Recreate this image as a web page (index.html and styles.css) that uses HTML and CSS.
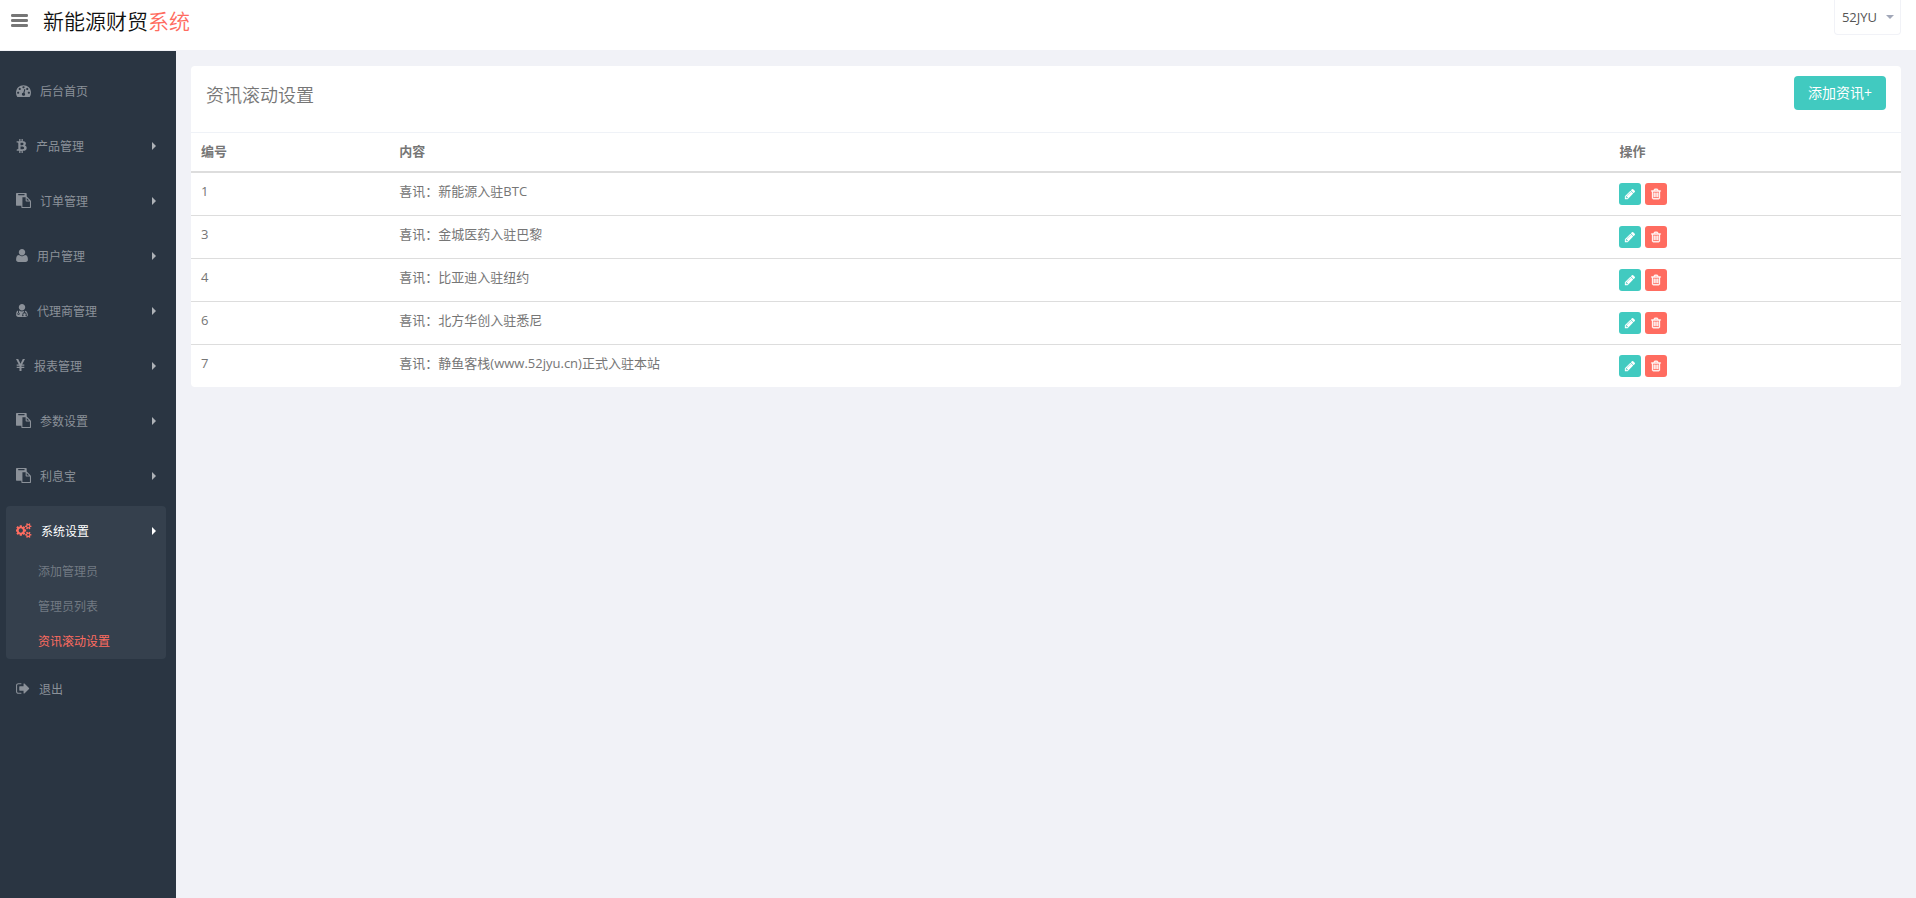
FILE: index.html
```html
<!DOCTYPE html>
<html lang="zh-CN">
<head>
<meta charset="utf-8">
<meta name="viewport" content="width=device-width, initial-scale=1">
<title>资讯滚动设置</title>
<link rel="stylesheet" href="styles.css">
</head>
<body>
<svg class="sprite" aria-hidden="true">
  <symbol id="i-bars" viewBox="0 0 17 14"><path d="M0 1.2q0-1.2 1.2-1.2h14.6q1.200 0 1.200 1.200v.6q0 1.200-1.200 1.200H1.200Q0 3 0 1.800zM0 6.200q0-1.200 1.200-1.200h14.600q1.200 0 1.200 1.200v.6q0 1.200-1.200 1.200H1.200Q0 8 0 6.800zM0 11.200q0-1.200 1.200-1.200h14.600q1.200 0 1.200 1.200v.6q0 1.200-1.200 1.200H1.200Q0 13 0 11.800z"/></symbol>
  <symbol id="i-dash" viewBox="0 0 1792 1792"><path d="M384 1152q0-53-37.5-90.5t-90.5-37.5-90.5 37.500-37.500 90.500 37.500 90.500 90.500 37.500 90.500-37.500 37.500-90.500zm192-448q0-53-37.500-90.500t-90.500-37.500-90.500 37.500-37.500 90.500 37.500 90.500 90.500 37.500 90.500-37.500 37.500-90.500zm428 481l101-382q6-26-7.500-48.500t-38.500-29.500-48 6.500-30 39.500l-101 382q-60 5-107 43.500t-63 98.500q-20 77 20 146t117 89 146-20 89-117q16-60-6-117t-72-91zm660-33q0-53-37.500-90.500t-90.500-37.500-90.500 37.500-37.500 90.500 37.500 90.500 90.500 37.500 90.500-37.500 37.500-90.500zm-640-640q0-53-37.500-90.500t-90.500-37.500-90.500 37.500-37.500 90.500 37.500 90.500 90.500 37.500 90.500-37.500 37.500-90.500zm448 192q0-53-37.500-90.500t-90.500-37.500-90.500 37.500-37.500 90.500 37.500 90.500 90.500 37.500 90.500-37.500 37.500-90.500zm320 448q0 261-141 483-19 29-54 29h-1402q-35 0-54-29-141-221-141-483 0-182 71-348t191-286 286-191 348-71 348 71 286 191 191 286 71 348z"/></symbol>
  <symbol id="i-btc" viewBox="0 0 1280 1792"><path d="M1167 640q18 182-131 258 117 28 175 103t45 214q-7 71-32.500 125t-64.500 89-97 58.500-121.500 34.500-145.500 15v255h-154v-251q-80 0-122-1v252h-154v-255q-18 0-54-.5t-55-.5h-200l31-183h111q50 0 58-51v-402h16q-6-1-16-1v-287q-13-68-89-68h-111v-164l212 1q64 0 97-1v-252h154v247q82-2 122-2v-245h154v252q79 7 140 22.500t113 45 82.500 78 36.500 114.500zm-215 545q0-36-15-64t-37-46-57.500-30.500-65.500-18.500-74-9-69-3-64.500 1-47.500 1v338q8 0 37 .5t48 .5 53-1.500 58.500-4 57-8.500 55.500-14 47.500-21 39.500-30 24.500-40 9.500-51zm-71-476q0-33-12.500-58.500t-30.500-42-48-28-55-16.500-61.500-8-58-2.500-54 1-39.500.5v307q5 0 34.500.5t46.500 0 50-2 55-5.500 51.500-11 48.500-18.500 37-27 27-38.500 9-51z"/></symbol>
  <symbol id="i-paste" viewBox="0 0 1792 1792"><path d="M768 1664h896v-640h-416q-40 0-68-28t-28-68v-416h-384v1152zm256-1440v-64q0-13-9.500-22.500t-22.500-9.500h-704q-13 0-22.500 9.500t-9.500 22.500v64q0 13 9.500 22.500t22.500 9.500h704q13 0 22.500-9.500t9.500-22.500zm256 672h299l-299-299v299zm512 128v672q0 40-28 68t-68 28h-960q-40 0-68-28t-28-68v-160h-544q-40 0-68-28t-28-68v-1344q0-40 28-68t68-28h1088q40 0 68 28t28 68v328q21 13 36 28l408 408q28 28 48 76t20 88z"/></symbol>
  <symbol id="i-user" viewBox="192 0 1408 1792"><path d="M1600 1405q0 120-73 189.500t-194 69.500h-874q-121 0-194-69.500t-73-189.500q0-53 3.500-103.500t14-109 26.500-108.500 43-97.500 62-81 85.500-53.500 111.500-20q9 0 42 21.500t74.500 48 108 48 133.500 21.500 133.500-21.500 108-48 74.500-48 42-21.500q61 0 111.500 20t85.500 53.500 62 81 43 97.500 26.500 108.500 14 109 3.500 103.500zm-320-893q0 159-112.500 271.500t-271.500 112.500-271.500-112.500-112.500-271.500 112.500-271.500 271.500-112.500 271.500 112.500 112.500 271.500z"/></symbol>
  <symbol id="i-doctor" viewBox="192 0 1408 1792"><path d="M1280 512q0 159-112.500 271.500t-271.500 112.500-271.500-112.500-112.500-271.500 112.500-271.500 271.500-112.500 271.500 112.500 112.500 271.500z"/><path fill-rule="evenodd" d="M459 1664q-121 0-194-69.500t-73-189.500q0-180 45-320 50-150 190-180v250a140 140 0 1 0 110 0v-245q170 110 359 110 130 0 250-50v140q-190 20-200 220v90a90 90 0 1 0 100 0v-90q0-120 150-120t150 120v90a90 90 0 1 0 100 0v-90q0-180-190-218V930q254 20 344 475 0 120-73 189.500t-194 69.500zM480 1230a60 60 0 1 0 .1 0z"/></symbol>
  <symbol id="i-yen" viewBox="0 0 9 15"><path d="M0 1h2.200l2.300 4.700L6.800 1H9L6.200 6.400H8.300v1.300H5.500v1H8.300V10H5.500v3H3.500v-3H.7V8.700H3.500v-1H.7V6.400H2.800z"/></symbol>
  <symbol id="i-cogs" viewBox="0 0 1920 1792"><path d="M832 896q0-106-75-181t-181-75-181 75-75 181 75 181 181 75 181-75 75-181zm768 512q0-52-38-90t-90-38-90 38-38 90q0 53 37.500 90.500t90.500 37.500 90.500-37.500 37.500-90.500zm0-1024q0-52-38-90t-90-38-90 38-38 90q0 53 37.500 90.500t90.500 37.500 90.500-37.500 37.500-90.500zm-384 421v185q0 10-7 19.500t-16 10.500l-155 24q-11 35-32 76 34 48 90 115 7 11 7 20 0 12-7 19-23 30-82.500 89.500t-78.500 59.500q-11 0-21-7l-115-90q-37 19-77 31-11 108-23 155-7 24-30 24h-186q-11 0-20-7.500t-10-17.500l-23-153q-34-10-75-31l-118 89q-7 7-20 7-11 0-21-8-144-133-144-160 0-9 7-19 10-14 41-53t47-61q-23-44-35-82l-152-24q-10-1-17-9.500t-7-19.500v-185q0-10 7-19.500t16-10.500l155-24q11-35 32-76-34-48-90-115-7-11-7-20 0-12 7-20 22-30 82-89t79-59q11 0 21 7l115 90q34-18 77-32 11-108 23-154 7-24 30-24h186q11 0 20 7.500t10 17.500l23 153q34 10 75 31l118-89q8-7 20-7 11 0 21 8 144 133 144 160 0 8-7 19-12 16-42 54t-45 60q23 48 34 82l152 23q10 2 17 10.500t7 19.500zm640 533v140q0 16-149 31-12 27-30 52 51 113 51 138 0 4-4 7-122 71-124 71-8 0-46-47t-52-68q-20 2-30 2t-30-2q-14 21-52 68t-46 47q-2 0-124-71-4-3-4-7 0-25 51-138-18-25-30-52-149-15-149-31v-140q0-16 149-31 13-29 30-52-51-113-51-138 0-4 4-7 4-2 35-20t59-34 30-16q8 0 46 46.500t52 67.500q20-2 30-2t30 2q51-71 92-112l6-2q4 0 124 70 4 3 4 7 0 25-51 138 17 23 30 52 149 15 149 31zm0-1024v140q0 16-149 31-12 27-30 52 51 113 51 138 0 4-4 7-122 71-124 71-8 0-46-47t-52-68q-20 2-30 2t-30-2q-14 21-52 68t-46 47q-2 0-124-71-4-3-4-7 0-25 51-138-18-25-30-52-149-15-149-31v-140q0-16 149-31 13-29 30-52-51-113-51-138 0-4 4-7 4-2 35-20t59-34 30-16q8 0 46 46.500t52 67.500q20-2 30-2t30 2q51-71 92-112l6-2q4 0 124 70 4 3 4 7 0 25-51 138 17 23 30 52 149 15 149 31z"/></symbol>
  <symbol id="i-exit" viewBox="64 0 1664 1792"><path d="M704 1440q0 4 1 20t.5 26.500-3 23.500-10 19.500-20.500 6.500h-320q-119 0-203.500-84.500t-84.500-203.500v-704q0-119 84.500-203.500t203.500-84.500h320q13 0 22.500 9.500t9.500 22.500q0 4 1 20t.5 26.500-3 23.500-10 19.500-20.500 6.500h-320q-66 0-113 47t-47 113v704q0 66 47 113t113 47h312l11.500 1 11.500 3 8 5.500 7 9 2 13.500zm928-544q0 26-19 45l-544 544q-19 19-45 19t-45-19-19-45v-288h-448q-26 0-45-19t-19-45v-384q0-26 19-45t45-19h448v-288q0-26 19-45t45-19 45 19l544 544q19 19 19 45z"/></symbol>
  <symbol id="i-pencil" viewBox="0 0 1792 1792"><path d="M491 1536l91-91-235-235-91 91v107h128v128h107zm523-928q0-22-22-22-10 0-17 7l-542 542q-7 7-7 17 0 22 22 22 10 0 17-7l542-542q7-7 7-17zm-54-192l416 416-832 832h-416v-416zm683 96q0 53-37 90l-166 166-416-416 166-165q36-38 90-38 53 0 91 38l235 234q37 39 37 91z"/></symbol>
  <symbol id="i-trash" viewBox="0 0 1792 1792"><path d="M704 736v576q0 14-9 23t-23 9h-64q-14 0-23-9t-9-23v-576q0-14 9-23t23-9h64q14 0 23 9t9 23zm256 0v576q0 14-9 23t-23 9h-64q-14 0-23-9t-9-23v-576q0-14 9-23t23-9h64q14 0 23 9t9 23zm256 0v576q0 14-9 23t-23 9h-64q-14 0-23-9t-9-23v-576q0-14 9-23t23-9h64q14 0 23 9t9 23zm128 724v-948h-896v948q0 22 7 40.500t14.500 27 10.500 8.500h832q3 0 10.500-8.500t14.500-27 7-40.500zm-672-1076h448l-48-117q-7-9-17-11h-317q-10 2-17 11zm928 32v64q0 14-9 23t-23 9h-96v948q0 83-47 143.500t-113 60.500h-832q-66 0-113-58.500t-47-141.500v-952h-96q-14 0-23-9t-9-23v-64q0-14 9-23t23-9h309l70-167q15-37 54-63t79-26h320q40 0 79 26t54 63l70 167h309q14 0 23 9t9 23z"/></symbol>
</svg>

<header class="header">
  <button class="toggle" type="button" aria-label="切换菜单"><svg><use href="#i-bars"/></svg></button>
  <a class="logo" href="#">新能源财贸<span>系统</span></a>
  <button class="account" type="button">52JYU<i class="caret-down"></i></button>
</header>

<div class="body">
  <nav class="sidebar">
    <ul class="menu">
      <li><a class="item" href="#"><svg class="w15"><use href="#i-dash"/></svg>后台首页</a></li>
      <li><a class="item" href="#"><svg class="w11"><use href="#i-btc"/></svg>产品管理<i class="arrow"></i></a></li>
      <li><a class="item" href="#"><svg class="w15"><use href="#i-paste"/></svg>订单管理<i class="arrow"></i></a></li>
      <li><a class="item" href="#"><svg class="w12"><use href="#i-user"/></svg>用户管理<i class="arrow"></i></a></li>
      <li><a class="item" href="#"><svg class="w12"><use href="#i-doctor"/></svg>代理商管理<i class="arrow"></i></a></li>
      <li><a class="item" href="#"><svg class="w9"><use href="#i-yen"/></svg>报表管理<i class="arrow"></i></a></li>
      <li><a class="item" href="#"><svg class="w15"><use href="#i-paste"/></svg>参数设置<i class="arrow"></i></a></li>
      <li><a class="item" href="#"><svg class="w15"><use href="#i-paste"/></svg>利息宝<i class="arrow"></i></a></li>
      <li class="open">
        <a class="item" href="#"><svg class="w16"><use href="#i-cogs"/></svg>系统设置<i class="arrow"></i></a>
        <ul class="submenu">
          <li><a href="#">添加管理员</a></li>
          <li><a href="#">管理员列表</a></li>
          <li><a class="current" href="#">资讯滚动设置</a></li>
        </ul>
      </li>
      <li><a class="item" href="#"><svg class="w14"><use href="#i-exit"/></svg>退出</a></li>
    </ul>
  </nav>

  <main class="main">
    <section class="panel">
      <div class="panel-head">
        <h1>资讯滚动设置</h1>
        <button class="add" type="button">添加资讯+</button>
      </div>
      <table class="list">
        <colgroup><col class="col-id"><col class="col-text"><col></colgroup>
        <thead><tr><th>编号</th><th>内容</th><th>操作</th></tr></thead>
        <tbody>
          <tr><td>1</td><td>喜讯：新能源入驻BTC</td><td class="ops"><div class="actions"><button class="edit" type="button" aria-label="编辑"><svg><use href="#i-pencil"/></svg></button><button class="remove" type="button" aria-label="删除"><svg><use href="#i-trash"/></svg></button></div></td></tr>
          <tr><td>3</td><td>喜讯：金城医药入驻巴黎</td><td class="ops"><div class="actions"><button class="edit" type="button" aria-label="编辑"><svg><use href="#i-pencil"/></svg></button><button class="remove" type="button" aria-label="删除"><svg><use href="#i-trash"/></svg></button></div></td></tr>
          <tr><td>4</td><td>喜讯：比亚迪入驻纽约</td><td class="ops"><div class="actions"><button class="edit" type="button" aria-label="编辑"><svg><use href="#i-pencil"/></svg></button><button class="remove" type="button" aria-label="删除"><svg><use href="#i-trash"/></svg></button></div></td></tr>
          <tr><td>6</td><td>喜讯：北方华创入驻悉尼</td><td class="ops"><div class="actions"><button class="edit" type="button" aria-label="编辑"><svg><use href="#i-pencil"/></svg></button><button class="remove" type="button" aria-label="删除"><svg><use href="#i-trash"/></svg></button></div></td></tr>
          <tr><td>7</td><td>喜讯：静鱼客栈(www.52jyu.cn)正式入驻本站</td><td class="ops"><div class="actions"><button class="edit" type="button" aria-label="编辑"><svg><use href="#i-pencil"/></svg></button><button class="remove" type="button" aria-label="删除"><svg><use href="#i-trash"/></svg></button></div></td></tr>
        </tbody>
      </table>
    </section>
  </main>
</div>
</body>
</html>
```
FILE: styles.css
```css
* { box-sizing: border-box; }

body {
  margin: 0;
  min-height: 100vh;
  display: flex;
  flex-direction: column;
  background: #f1f2f7;
  color: #767676;
  font: 13px/18px "Open Sans", "Noto Sans CJK SC", sans-serif;
}

a { color: inherit; text-decoration: none; }
ul { list-style: none; margin: 0; padding: 0; }
svg { fill: currentColor; display: block; }
.sprite { display: none; }

button {
  border: 0;
  padding: 0;
  background: none;
  color: inherit;
  font: inherit;
  cursor: pointer;
}

/* Header */
.header {
  display: flex;
  align-items: flex-start;
  padding: 0 15px 0 11px;
  height: 51px;
  background: #fff;
  border-bottom: 1px solid #f1f2f7;
}
.toggle { margin-top: 14px; }
.toggle svg { width: 17px; height: 14px; }
.logo {
  margin: 6px 0 0 15px;
  color: #111;
  font-size: 21px;
  font-weight: 350;
  line-height: 30px;
}
.logo span { color: #ff6c60; }
.account {
  display: flex;
  align-items: center;
  gap: 9px;
  margin-left: auto;
  height: 35px;
  padding: 0 6px 0 7px;
  border: 1px solid #f1f2f7;
  border-top: 0;
  border-radius: 0 0 4px 4px;
  color: #555;
}
.caret-down {
  border: 4px solid transparent;
  border-top-color: #a1a7b8;
  border-bottom: 0;
}

.body { flex: 1; display: flex; }

/* Sidebar */
.sidebar {
  width: 176px;
  flex: none;
  padding: 15px 10px 15px 6px;
  background: #2a3542;
  color: #8b9199;
  font-size: 12px;
}
.menu > li { margin-bottom: 5px; border-radius: 4px; }
.item {
  display: flex;
  align-items: center;
  gap: 9px;
  height: 50px;
  padding: 2px 10px 0;
}
.item svg { height: 15px; margin-bottom: 4px; }
.w9 { width: 9px; }
.w11 { width: 11px; }
.w12 { width: 12px; }
.w14 { width: 14px; }
.w15 { width: 15px; }
.w16 { width: 16px; }
.arrow {
  margin: 0 0 2px auto;
  border: 4px solid transparent;
  border-left-color: #aeb2b7;
  border-right: 0;
}
.open { background: #35404d; }
.open .item { color: #fff; }
.open .item svg { color: #ff6c60; }
.open .arrow { border-left-color: #fff; }
.submenu { margin-top: -2px; color: #727a83; }
.submenu a { display: block; padding-left: 32px; line-height: 35px; }
.submenu .current { color: #ff6c60; }

/* Content */
.main { flex: 1; min-width: 0; padding: 15px; }
.panel { background: #fff; border-radius: 4px; }
.panel-head {
  display: flex;
  justify-content: space-between;
  align-items: flex-start;
  padding: 10px 15px 22px;
  border-bottom: 1px solid #eff2f7;
}
.panel-head h1 {
  margin: 5px 0 0;
  font-size: 18px;
  font-weight: 350;
  line-height: 28px;
}
.add {
  height: 34px;
  padding: 0 14px;
  border-radius: 4px;
  background: #41cac0;
  color: #fff;
  font-size: 14px;
}

.list { width: 100%; table-layout: fixed; border-spacing: 0; }
.col-id { width: 11.6%; }
.col-text { width: 71.35%; }
.list th, .list td { padding: 9px 10px 11px; text-align: left; vertical-align: top; }
.list th { border-bottom: 2px solid #ddd; }
.list td { border-bottom: 1px solid #ddd; }
.list .ops { padding: 10px; }
.list tbody tr:last-child td { border-bottom: 0; }

.actions { display: flex; gap: 4px; }
.actions button {
  display: grid;
  place-items: center;
  width: 22px;
  height: 22px;
  border-radius: 3px;
  color: #fff;
}
.actions svg { width: 12px; height: 12px; }
.remove svg { stroke: currentColor; stroke-width: 60px; }
.edit { background: #41cac0; }
.remove { background: #ff6c60; }
```
